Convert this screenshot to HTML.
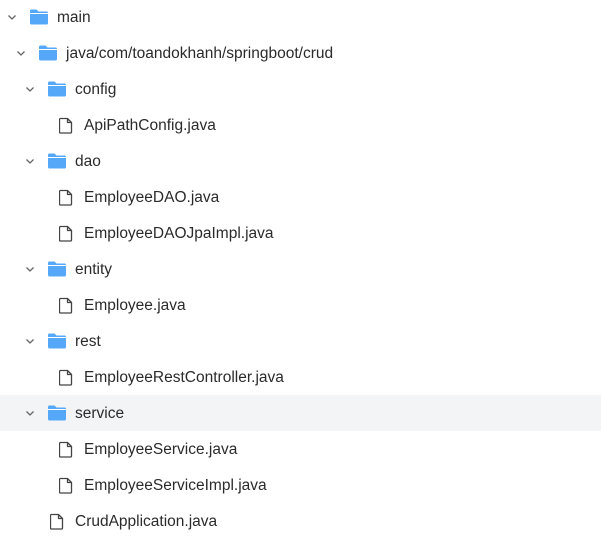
<!DOCTYPE html>
<html><head><style>
body{margin:0;width:601px;height:545px;background:#fff;font-family:"Liberation Sans",sans-serif;font-size:15.5px;color:#2b2b2b;overflow:hidden}
.r{position:absolute;left:0;width:601px;height:36px}
.hl{background:#f3f4f6}
.t{position:absolute;top:10px;white-space:nowrap}
svg{position:absolute}
</style></head><body>
<div id="c"></div>
<script>
const rows=[
[0,'f','main'],[1,'f','java/com/toandokhanh/springboot/crud'],[2,'f','config'],[3,'d','ApiPathConfig.java'],
[2,'f','dao'],[3,'d','EmployeeDAO.java'],[3,'d','EmployeeDAOJpaImpl.java'],[2,'f','entity'],[3,'d','Employee.java'],
[2,'f','rest'],[3,'d','EmployeeRestController.java'],[2,'f','service',1],[3,'d','EmployeeService.java'],[3,'d','EmployeeServiceImpl.java'],[2,'c','CrudApplication.java']];
let h='';
rows.forEach((r,i)=>{
 const top=36*i; const lv=r[0];const off=9*lv;
 h+=`<div class="r${r[3]?' hl':''}" style="top:${top-1}px">`;
 if(r[1]=='f'){
  h+=`<svg style="left:${7+off}px;top:15px" width="10" height="7" viewBox="0 0 10 7"><path d="M1.5 1.5l3.5 3.5 3.5-3.5" fill="none" stroke="#666" stroke-width="1.3"/></svg>`;
  h+=`<svg style="left:${30+off}px;top:10px" width="18" height="16" viewBox="0 0 18 16"><path d="M0 2a1.5 1.5 0 0 1 1.5-1.5h5l2 2h8a1.5 1.5 0 0 1 1.5 1.5v10a1.5 1.5 0 0 1-1.5 1.5h-15A1.5 1.5 0 0 1 0 14z" fill="#55a8f7"/><path d="M0 4.5h18" stroke="#fff" stroke-width="1"/></svg>`;
  h+=`<span class="t" style="left:${57+off}px">${r[2]}</span>`;
 }else{
  const ix=r[1]=='c'?50:59, tx=r[1]=='c'?75:84;
  h+=`<svg style="left:${ix}px;top:10px" width="14" height="17" viewBox="0 0 14 17"><path d="M1.5 1.5h7l4 4v9.5a1 1 0 0 1-1 1h-10a1 1 0 0 1-1-1v-12.5a1 1 0 0 1 1-1zM8.5 1.5v4h4" fill="none" stroke="#444" stroke-width="1.3" stroke-linejoin="round"/></svg>`;
  h+=`<span class="t" style="left:${tx}px">${r[2]}</span>`;
 }
 h+='</div>';
});
document.getElementById('c').innerHTML=h;
</script>
</body></html>
